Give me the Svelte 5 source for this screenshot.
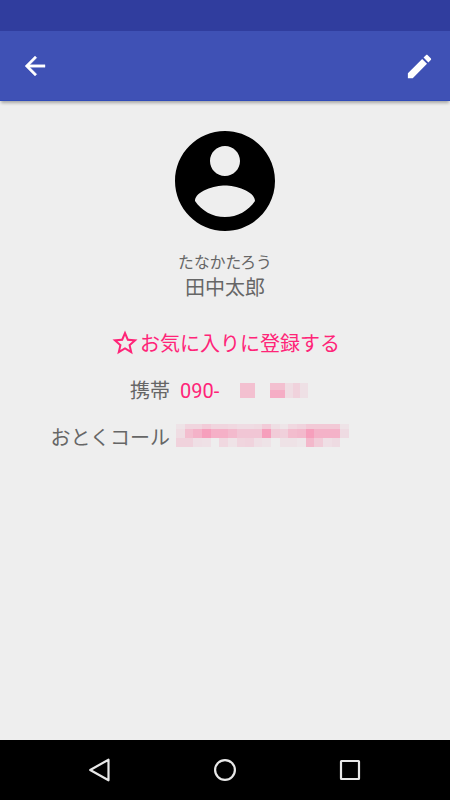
<script>
  const topRow = ['#eee3e7','#f0d5de','#f0d5de','#f2cbd8','#f0d5de','#f0d5de','#f0d8e0','#efdce3','#efdce3','#efdae1','#f2cbd8','#eedfe4','#eee5e8','#f0d8e0','#f0d3dd','#f2c9d6','#f2c9d6','#f2c9d6','#f2c9d6','#eee3e7'];
  const midRow = ['#efdde3','#f3becf','#f4b2c8','#f69fbc','#f5b0c7','#f5b0c7','#f3bacd','#f1c6d5','#f1c6d5','#f1c6d5','#f69fbc','#f1ccd8','#f0d0db','#f3bdce','#f3b9cc','#f69fbc','#f4b2c8','#f4b2c8','#f4b2c8','#eedbe2'];
  const lowRow = ['#f0d2dc','#f0d2dc','#efdfe5','#efe1e6','transparent','#f0d8e0','#efe3e7','#f0d5de','#f0d3dd','#efdfe5','#eee3e7','transparent','#eee2e6','#eee2e6','#eee6e9','#f3b8cb','#f1ccd8','#efdfe5','#eedbe2','transparent'];
</script>

<div class="screen">
  <div class="status"></div>
  <header>
    <svg class="back" viewBox="0 0 24 24" fill="#fff" stroke="#fff" stroke-width=".3"><path d="M20 11H7.83l5.59-5.59L12 4l-8 8 8 8 1.41-1.41L7.83 13H20v-2z" /></svg>
    <svg class="edit" viewBox="0 0 24 24" fill="#fff"><path d="M3 17.25V21h3.75L17.81 9.94l-3.75-3.75L3 17.25zM20.71 7.04c.39-.39.39-1.02 0-1.41l-2.34-2.34c-.39-.39-1.02-.39-1.41 0l-1.83 1.83 3.75 3.75 1.83-1.83z" /></svg>
  </header>

  <main>
    <svg class="avatar" viewBox="2 2 20 20"><path d="M12 2C6.48 2 2 6.48 2 12s4.48 10 10 10 10-4.48 10-10S17.52 2 12 2zm0 3c1.66 0 3 1.34 3 3s-1.34 3-3 3-3-1.34-3-3 1.34-3 3-3zm0 14.2c-2.5 0-4.71-1.28-6-3.22.03-1.99 4-3.08 6-3.08 1.99 0 5.97 1.09 6 3.08-1.29 1.94-3.5 3.22-6 3.22z" /></svg>
    <div class="kana">たなかたろう</div>
    <div class="name">田中太郎</div>
    <div class="favorite">
      <svg viewBox="0 0 24 24" fill="#ff2478"><path d="M22 9.24l-7.19-.62L12 2 9.19 8.63 2 9.24l5.46 4.73L5.82 21 12 17.27 18.18 21l-1.63-7.03L22 9.24zM12 15.4l-3.76 2.27 1-4.28-3.32-2.88 4.38-.38L12 6.1l1.71 4.04 4.38.38-3.32 2.88 1 4.28L12 15.4z" /></svg>
      <span>お気に入りに登録する</span>
    </div>
    <div class="row">
      <span class="label">携帯</span>
      <span class="phone">090-</span>
      <div class="hidden-number">
        <i class="block"></i>
        <i class="block split"></i>
        <i class="faint a"></i><i class="faint b"></i><i class="faint c"></i>
      </div>
    </div>
    <div class="row second">
      <span class="label">おとくコール</span>
      <div class="mosaic">
        {#each [...topRow, ...midRow, ...lowRow] as color}
          <i style:background={color}></i>
        {/each}
      </div>
    </div>
  </main>

  <nav>
    <svg viewBox="0 0 24 24"><path d="M2.2 12 20.5 1.7V22.3Z" /></svg>
    <svg viewBox="0 0 24 24"><circle cx="12" cy="12" r="9.9" /></svg>
    <svg viewBox="0 0 24 24"><rect x="3" y="3" width="18" height="18" rx=".4" /></svg>
  </nav>
</div>

<style>
  .screen {
    width: 450px;
    height: 800px;
    display: flex;
    flex-direction: column;
    overflow: hidden;
    background: #eee;
    color: #666;
    font-family: Roboto, "Noto Sans CJK JP", sans-serif;
  }
  svg { display: block; flex: none; }
  .status { height: 31px; flex: none; background: #303d9e; }
  header {
    height: 70px;
    flex: none;
    box-sizing: border-box;
    display: flex;
    align-items: center;
    justify-content: space-between;
    padding: 0 15px 0 20px;
    background: #3f51b5;
    border-bottom: 1px solid #304bb8;
    box-shadow: 0 3px 3px -1px rgba(0, 0, 0, .3);
  }
  .back { width: 30px; height: 30px; margin-top: 1px; }
  .edit { width: 31px; height: 31px; margin-top: 1px; }
  main {
    flex: 1;
    display: flex;
    flex-direction: column;
    align-items: center;
    padding-top: 30px;
  }
  .avatar { width: 100px; height: 100px; }
  .kana { margin-top: 20px; height: 24px; font-size: 15.8px; line-height: 24px; }
  .name { height: 26px; font-size: 20px; line-height: 26px; }
  .favorite {
    display: flex;
    align-items: center;
    width: 230px;
    height: 30px;
    margin-top: 28px;
    color: #ff2478;
    font-size: 20px;
    line-height: 30px;
    white-space: nowrap;
  }
  .favorite svg { width: 30px; height: 30px; margin-top: -3px; }
  .row {
    width: 450px;
    height: 30px;
    margin-top: 17px;
    display: flex;
    align-items: center;
    font-size: 20px;
    line-height: 30px;
  }
  .label { width: 170px; text-align: right; flex: none; }
  .phone { width: 60px; margin-left: 10px; color: #ff2478; }
  .second { margin-top: 17px; }
  .hidden-number { display: flex; height: 15px; margin-top: -2px; }
  .block { width: 15px; height: 15px; background: #f3c0d0; }
  .block:first-child { margin-right: 15px; }
  .split { background: linear-gradient(#f3c0d0 50%, #f5adc5 50%); }
  .faint { width: 7.5px; height: 15px; }
  .a { background: #efdde3; }
  .b { background: #f0d2dc; }
  .c { background: #eee0e5; }
  .mosaic {
    display: grid;
    width: 173px;
    margin-left: 6px;
    margin-top: -6px;
    grid-template-columns: repeat(20, 1fr);
    grid-template-rows: 5px 9px 9px;
  }
  nav {
    height: 60px;
    flex: none;
    display: flex;
    align-items: center;
    justify-content: space-between;
    padding: 0 88px;
    background: #000;
  }
  nav svg {
    width: 24px;
    height: 24px;
    fill: none;
    stroke: #e8e8e8;
    stroke-width: 2.2;
    stroke-linejoin: round;
    overflow: visible;
  }
</style>
